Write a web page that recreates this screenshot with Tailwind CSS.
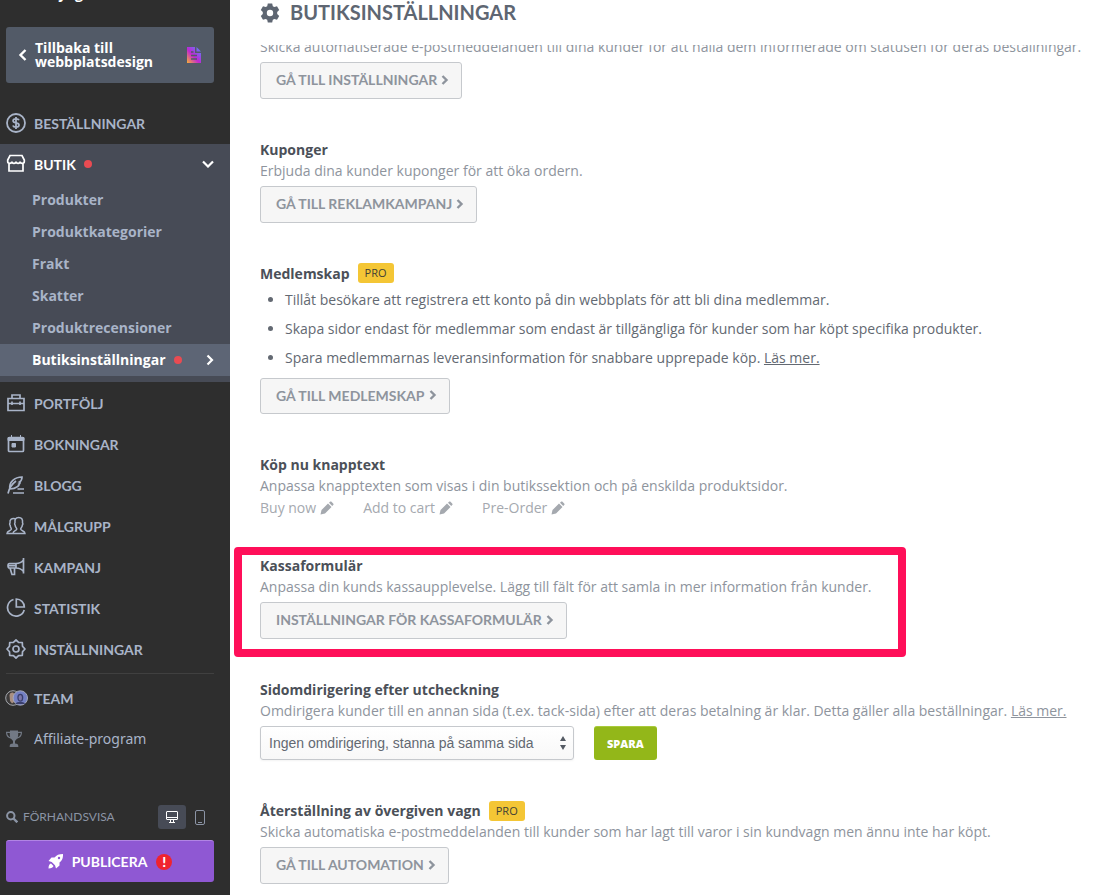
<!DOCTYPE html>
<html lang="sv">
  <head>
    <meta charset="utf-8">
    <title>Butiksinställningar</title>
    <script src="https://cdn.jsdelivr.net/npm/@tailwindcss/browser@4"></script>
  </head>
  <body class="flex h-screen overflow-hidden bg-white font-['Open_Sans',sans-serif] text-sm">
    <!-- icons used more than once -->
    <svg class="hidden">
      <symbol id="chevron" viewBox="0 0 8 10"><path d="M1.500 1l4 4-4 4" fill="none" stroke="currentColor" stroke-width="2.400"/></symbol>
      <symbol id="pencil" viewBox="0 0 14 14"><path d="M.5 13.500l1-4.500L8 2.500 11.500 6 5 12.500z M9 1.800l1-1c.5-.5 1-.5 1.500 0l1.700 1.700c.5.5.5 1 0 1.500l-1 1z" fill="currentColor"/></symbol>
    </svg>

    <aside class="flex w-[230px] shrink-0 flex-col overflow-hidden bg-[#2e2e2e] text-[#a9b4c8]">
      <div class="h-[27px] shrink-0 overflow-hidden">
        <p class="-mt-4 pl-7 leading-5 font-bold text-white">Min yoga</p>
      </div>
      <a href="#" class="mr-4 ml-[6px] flex h-14 shrink-0 items-center gap-2 rounded-[3px] bg-[#525a67] px-3 leading-[14px] font-bold text-white">
        <svg class="h-3.5 w-[9px] shrink-0" viewBox="0 0 9 14"><path d="M7.500 2L2.500 7l5 5" fill="none" stroke="currentColor" stroke-width="2.400"/></svg>
        <span class="flex-1">Tillbaka till webbplatsdesign</span>
        <svg class="size-4 shrink-0" viewBox="0 0 16 16">
          <defs><linearGradient id="doc" x1="0" y1="1" x2="1" y2="0"><stop offset="0" stop-color="#f9b233"/><stop offset=".45" stop-color="#c026d3"/><stop offset="1" stop-color="#4f8cff"/></linearGradient></defs>
          <path d="M1 0h8v6h6v10H1zM10.500 0L15 4.500h-4.500z" fill="url(#doc)"/>
          <path d="M5 5h2.500M5 8.500h6M5 12h6" stroke="#525a67" stroke-width="1.600"/>
        </svg>
      </a>

      <nav class="mt-5 font-['Lato',sans-serif] font-bold">
        <a href="#" class="mb-0.5 flex h-[39px] items-center gap-2 pl-[6px]">
          <svg class="size-5" viewBox="0 0 20 20" fill="none" stroke="currentColor" stroke-width="1.800"><circle cx="10" cy="10" r="9"/><path d="M13 7.300C12.500 6 11.300 5.800 10 5.800c-1.600 0-2.900.7-2.900 2s1.200 1.800 2.900 2.100 3 .9 3 2.200-1.400 2.100-3 2.100c-1.500 0-2.700-.5-3.100-1.800M10 4v12"/></svg>
          <span class="pt-0.5">BESTÄLLNINGAR</span>
        </a>
        <div class="bg-[#474b56] pb-[6px]">
          <a href="#" class="flex h-10 items-center gap-2 pr-4 pl-[6px] text-white">
            <svg class="size-5" viewBox="0 0 20 20" fill="none" stroke="currentColor" stroke-width="1.700"><path d="M4 1.500h12L18.300 6v1.500c0 2.600-4 2.600-4.200 0 0 2.600-4.100 2.600-4.100 0 0 2.600-4.100 2.600-4.100 0-.2 2.600-4.200 2.600-4.200 0V6zM3 9.500V17h14V9.500"/></svg>
            <span class="pt-0.5">BUTIK</span>
            <span class="size-2 rounded-full bg-[#e94b52]"></span>
            <svg class="ml-auto h-2 w-3" viewBox="0 0 12 8"><path d="M1 1.500l5 5 5-5" fill="none" stroke="currentColor" stroke-width="2.200"/></svg>
          </a>
          <div class="font-['Open_Sans',sans-serif] leading-8">
            <a href="#" class="block pl-8">Produkter</a>
            <a href="#" class="block pl-8">Produktkategorier</a>
            <a href="#" class="block pl-8">Frakt</a>
            <a href="#" class="block pl-8">Skatter</a>
            <a href="#" class="block pl-8">Produktrecensioner</a>
            <a href="#" class="flex items-center gap-2 bg-[#5d6575] pr-4 pl-8 text-white">
              Butiksinställningar
              <span class="size-2 rounded-full bg-[#e94b52]"></span>
              <svg class="ml-auto h-3 w-2" viewBox="0 0 8 12"><path d="M1.500 1.500L6 6l-4.500 4.500" fill="none" stroke="currentColor" stroke-width="2.200"/></svg>
            </a>
          </div>
        </div>
        <a href="#" class="flex h-[41px] items-center gap-2 pl-[6px]">
          <svg class="size-5" viewBox="0 0 20 20" fill="none" stroke="currentColor" stroke-width="1.700"><path d="M2 5.500h16v12H2zM6 5V2h8v3M2 10.500h16M6 8.500v3.500M14 8.500v3.500"/></svg>
          <span class="pt-0.5">PORTFÖLJ</span>
        </a>
        <a href="#" class="flex h-[41px] items-center gap-2 pl-[6px]">
          <svg class="size-5" viewBox="0 0 20 20" fill="none" stroke="currentColor" stroke-width="1.700"><rect x="2.500" y="3.500" width="15" height="14" rx="1"/><path d="M2 3.500h16v3H2zM5.500 1v3M14.500 1v3M6 9.500h3.500V13H6z" fill="currentColor" stroke-width="1"/></svg>
          <span class="pt-0.5">BOKNINGAR</span>
        </a>
        <a href="#" class="flex h-[41px] items-center gap-2 pl-[6px]">
          <svg class="size-5" viewBox="0 0 20 20" fill="none" stroke="currentColor" stroke-width="1.700"><path d="M2 18.500C3 13.500 6 9 10 6M4 14C2.500 7 9 2 16 2c0 3-1 4-2.500 5 1 .3.500 1.500-.5 2 .8.500-2 5-9 5M11.500 14H18M7 18h11"/></svg>
          <span class="pt-0.5">BLOGG</span>
        </a>
        <a href="#" class="flex h-[41px] items-center gap-2 pl-[6px]">
          <svg class="size-5" viewBox="0 0 20 20" fill="none" stroke="currentColor" stroke-width="1.500"><path d="M7 17.500h12c0-3-4-2.500-4.300-4.300-.1-1.200 1.600-2 1.600-4 .7-.5.700-2 .2-2.400C17 3 15.500 1.500 12.700 1.500S8.500 3 9 6.800c-.5.500-.5 1.900.2 2.400 0 2 1.700 2.800 1.600 4C10.500 15 7 14.500 7 17.500zM9 2.800C6 1.800 3.500 3.500 4 7c-.5.500-.5 1.900.2 2.400 0 2 1.300 2.600 1.200 3.800C5 15 1 14.500 1 17.500h6"/></svg>
          <span class="pt-0.5">MÅLGRUPP</span>
        </a>
        <a href="#" class="flex h-[41px] items-center gap-2 pl-[6px]">
          <svg class="size-5" viewBox="0 0 20 20" fill="none" stroke="currentColor" stroke-width="1.700"><path d="M17.500 1v15.500M17.500 3c-2 2.500-4.500 3.500-7.500 3.500H3.500c-2 0-2 4.500 0 4.500H10c3 0 5.500 1 7.500 3.500M10 6.500V11M2 8.700h8M4 11l2 6.500h2.500V11"/></svg>
          <span class="pt-0.5">KAMPANJ</span>
        </a>
        <a href="#" class="flex h-[41px] items-center gap-2 pl-[6px]">
          <svg class="size-5" viewBox="0 0 20 20" fill="none" stroke="currentColor" stroke-width="1.700"><path d="M7.500 1.500a8.500 8.500 0 1 0 10.700 10.500M10.300 1v8h8c0-4.500-3.500-8-8-8z"/></svg>
          <span class="pt-0.5">STATISTIK</span>
        </a>
        <a href="#" class="flex h-[41px] items-center gap-2 pl-[6px]">
          <svg class="size-5" viewBox="0 0 20 20" fill="none" stroke="currentColor" stroke-width="1.700" stroke-linejoin="round"><path d="M10 1l2.600 2.300 3.700.2.200 3.700L19 10l-2.500 2.800-.2 3.700-3.700.2L10 19l-2.600-2.300-3.700-.2-.2-3.700L1 10l2.500-2.800.2-3.700 3.700-.2z"/><circle cx="10" cy="10" r="3"/></svg>
          <span class="pt-0.5">INSTÄLLNINGAR</span>
        </a>
        <hr class="mt-1 mr-4 ml-[6px] border-[#404040]">
        <a href="#" class="mt-1 flex h-10 items-center gap-[6px] pl-[5px]">
          <svg class="h-4 w-[23px]" viewBox="0 0 23 16"><circle cx="8" cy="8" r="7.300" fill="#3c3a3a" stroke="#a5a8ae"/><path d="M4.500 5c1-3 4-3 4.500-1v8l-2 1.500-2-2.500z" fill="#a98f80"/><circle cx="15.300" cy="8" r="7.200" fill="#7480c4" stroke="#a5a8ba"/><path d="M12.300 7c0-4.500 6-4.500 6 0s-1.500 4.500-3 4.500-3-1-3-4.500zM10.500 14c1-3 8.500-3 9.500 0" fill="#3a3f6e"/><ellipse cx="15.300" cy="7.800" rx="1.700" ry="2.700" fill="#7d78a8"/></svg>
          <span class="pt-0.5">TEAM</span>
        </a>
        <a href="#" class="flex h-10 items-center gap-3 pl-[6px] font-['Noto_Sans',sans-serif] font-normal">
          <svg class="h-[17px] w-4 text-[#727985]" viewBox="0 0 16 17" fill="currentColor"><path d="M4 .5h8v1.300h4C16 6 14.500 8 11 8.700 10 10 9 10.500 9 11v2.500c2 0 3.300.8 3.300 2.500v1H3.700v-1c0-1.700 1.300-2.500 3.300-2.500V11c0-.5-1-1-2-2.300C1.500 8 0 6 0 1.800h4zM1.200 3c.3 2 1.200 3.500 3 4.200C3.800 6 3.700 4.500 3.800 3zm13.600 0h-2.600c.1 1.500 0 3-.4 4.200 1.800-.7 2.700-2.200 3-4.200z"/></svg>
          <span class="pt-0.5">Affiliate-program</span>
        </a>
      </nav>

      <div class="mt-auto mr-4 mb-[13px] ml-[6px] font-['Lato',sans-serif]">
        <div class="flex h-6 items-center text-xs text-[#8b94a5]">
          <svg class="mr-[5px] size-3" viewBox="0 0 12 12" fill="none" stroke="currentColor" stroke-width="2"><circle cx="4.800" cy="4.800" r="3.700"/><path d="M7.500 7.500l3.800 3.800" stroke-width="2.400"/></svg>
          FÖRHANDSVISA
          <button type="button" aria-label="Dator" class="ml-auto flex h-6 w-7 items-center justify-center rounded-[3px] bg-[#474b56] text-white">
            <svg class="h-3 w-3" viewBox="0 0 12 12" fill="none" stroke="currentColor"><rect x=".5" y=".5" width="11" height="8" rx=".5"/><path d="M1 6.500h10M4.500 9v2M7.500 9v2M3 11.500h6"/></svg>
          </button>
          <button type="button" aria-label="Mobil" class="flex h-6 w-7 items-center justify-center">
            <svg class="h-[15px] w-[10px]" viewBox="0 0 10 15" fill="none" stroke="currentColor"><rect x=".5" y=".5" width="9" height="14" rx="1.500"/><path d="M3 12.500h4"/></svg>
          </button>
        </div>
        <button type="button" class="mt-[11px] flex h-[42px] w-full items-center justify-center gap-[9px] rounded-[3px] border-t border-[#b184e4] bg-[#8f58d3] font-bold text-white">
          <svg class="size-[15px]" viewBox="0 0 15 15"><path d="M15 0c.2 4-1 6.500-3.500 8.500v3L8 14.500 7 11.300 3.700 8 .5 7l3-3.500h3C8.500 1 11 0 15 0zM3 9.500L5.500 12c-.5 1.500-2 2.500-5 2.500 0-3 1-4.500 2.500-5z" fill="currentColor"/><circle cx="11" cy="4" r="1.200" fill="#8f58d3"/></svg>
          PUBLICERA
          <span class="flex size-4 items-center justify-center rounded-full bg-[#f0232f] font-black">!</span>
        </button>
      </div>
    </aside>

    <main class="flex min-w-0 flex-1 flex-col text-[#8e949d]">
      <h1 class="flex h-[45px] shrink-0 items-start gap-[10px] pl-[30px] font-['Lato',sans-serif] text-xl leading-6 font-bold text-[#5e6672]">
        <svg class="mt-[3px] size-5" viewBox="0 0 20 20"><path fill="currentColor" fill-rule="evenodd" d="M7.800.5h4.400l.6 2.700 1.500.9 2.700-.9 2.200 3.800-2 1.900v2.200l2 1.900-2.200 3.800-2.700-.9-1.500.9-.6 2.700H7.800l-.6-2.700-1.500-.9-2.700.9L.8 13l2-1.900V8.900L.8 7 3 3.200l2.700.9 1.500-.9zM10 6.800a3.200 3.200 0 1 0 0 6.400 3.200 3.200 0 0 0 0-6.400z"/></svg>
        BUTIKSINSTÄLLNINGAR
      </h1>

      <div class="flex flex-col gap-10 overflow-hidden pl-[30px] leading-[21px]">
        <section class="-mt-[9px]">
          <p>Skicka automatiserade e-postmeddelanden till dina kunder för att hålla dem informerade om statusen för deras beställningar.</p>
          <button type="button" class="mt-[5px] flex h-[37px] items-center gap-1 rounded-[3px] border border-[#c6c9cd] bg-[#f6f6f6] pr-3 pb-0.5 pl-[15px] font-['Lato',sans-serif] font-bold">GÅ TILL INSTÄLLNINGAR <svg class="h-[10px] w-2"><use href="#chevron"/></svg></button>
        </section>

        <section>
          <h2 class="font-bold text-[#4b5058]">Kuponger</h2>
          <p>Erbjuda dina kunder kuponger för att öka ordern.</p>
          <button type="button" class="mt-[5px] flex h-[37px] items-center gap-1 rounded-[3px] border border-[#c6c9cd] bg-[#f6f6f6] pr-3 pb-0.5 pl-[15px] font-['Lato',sans-serif] font-bold">GÅ TILL REKLAMKAMPANJ <svg class="h-[10px] w-2"><use href="#chevron"/></svg></button>
        </section>

        <section>
          <h2 class="flex gap-2 font-bold text-[#4b5058]">Medlemskap <span class="h-5 rounded-[3px] bg-[#f4c635] px-[7px] text-[11px] leading-[19px] font-medium text-[#3f3f35]">PRO</span></h2>
          <ul class="mt-px list-disc pl-[25px] leading-[29px] text-[#636972]">
            <li>Tillåt besökare att registrera ett konto på din webbplats för att bli dina medlemmar.</li>
            <li>Skapa sidor endast för medlemmar som endast är tillgängliga för kunder som har köpt specifika produkter.</li>
            <li>Spara medlemmarnas leveransinformation för snabbare upprepade köp. <a href="#" class="underline">Läs mer.</a></li>
          </ul>
          <button type="button" class="mt-[6px] flex h-9 items-center gap-1 rounded-[3px] border border-[#c6c9cd] bg-[#f6f6f6] pr-3 pb-0.5 pl-[15px] font-['Lato',sans-serif] font-bold">GÅ TILL MEDLEMSKAP <svg class="h-[10px] w-2"><use href="#chevron"/></svg></button>
        </section>

        <section class="-mb-[3px]">
          <h2 class="font-bold text-[#4b5058]">Köp nu knapptext</h2>
          <p>Anpassa knapptexten som visas i din butikssektion och på enskilda produktsidor.</p>
          <div class="mt-px flex gap-[29px] text-[#a5a9af]">
            <button type="button" class="flex items-center gap-1">Buy now <svg class="size-[14px]"><use href="#pencil"/></svg></button>
            <button type="button" class="flex items-center gap-1">Add to cart <svg class="size-[14px]"><use href="#pencil"/></svg></button>
            <button type="button" class="flex items-center gap-1">Pre-Order <svg class="size-[14px]"><use href="#pencil"/></svg></button>
          </div>
        </section>

        <section class="relative w-fit">
          <!-- highlight frame -->
          <div class="pointer-events-none absolute -top-2 -right-[34px] -bottom-[18px] -left-[26px] rounded-[4px] border-8 border-[#ff0f59]"></div>
          <h2 class="font-bold text-[#4b5058]">Kassaformulär</h2>
          <p>Anpassa din kunds kassaupplevelse. Lägg till fält för att samla in mer information från kunder.</p>
          <button type="button" class="mt-[5px] flex h-[37px] items-center gap-1 rounded-[3px] border border-[#c6c9cd] bg-[#f6f6f6] pr-3 pb-0.5 pl-[15px] font-['Lato',sans-serif] font-bold">INSTÄLLNINGAR FÖR KASSAFORMULÄR <svg class="h-[10px] w-2"><use href="#chevron"/></svg></button>
        </section>

        <section>
          <h2 class="font-bold text-[#4b5058]"><label for="redirect">Sidomdirigering efter utcheckning</label></h2>
          <p>Omdirigera kunder till en annan sida (t.ex. tack-sida) efter att deras betalning är klar. Detta gäller alla beställningar. <a href="#" class="underline">Läs mer.</a></p>
          <div class="mt-[5px] flex gap-5">
            <div class="relative w-[314px]">
              <select id="redirect" class="h-[34px] w-full appearance-none rounded-[3px] border border-[#c6c9cd] bg-linear-to-b from-white to-[#f8f8f8] px-2 font-['Liberation_Sans',sans-serif] text-[#636972] shadow-xs">
                <option>Ingen omdirigering, stanna på samma sida</option>
              </select>
              <svg class="pointer-events-none absolute top-[10px] right-[7px] h-[14px] w-2 text-[#555b64]" viewBox="0 0 8 14" fill="currentColor"><path d="M4 0l3 5H1zM4 14l3-5H1z"/></svg>
            </div>
            <button type="button" class="h-[34px] rounded-[3px] border-t border-[#a9cb3b] bg-[#93b719] px-[13px] text-[11px] font-extrabold text-white">SPARA</button>
          </div>
        </section>

        <section>
          <h2 class="flex gap-2 font-bold text-[#4b5058]">Återställning av övergiven vagn <span class="mt-px h-5 rounded-[3px] bg-[#f4c635] px-[7px] text-[11px] leading-[19px] font-medium text-[#3f3f35]">PRO</span></h2>
          <p>Skicka automatiska e-postmeddelanden till kunder som har lagt till varor i sin kundvagn men ännu inte har köpt.</p>
          <button type="button" class="mt-[5px] flex h-[37px] items-center gap-1 rounded-[3px] border border-[#c6c9cd] bg-[#f6f6f6] pr-3 pb-0.5 pl-[15px] font-['Lato',sans-serif] font-bold">GÅ TILL AUTOMATION <svg class="h-[10px] w-2"><use href="#chevron"/></svg></button>
        </section>
      </div>
    </main>
  </body>
</html>
